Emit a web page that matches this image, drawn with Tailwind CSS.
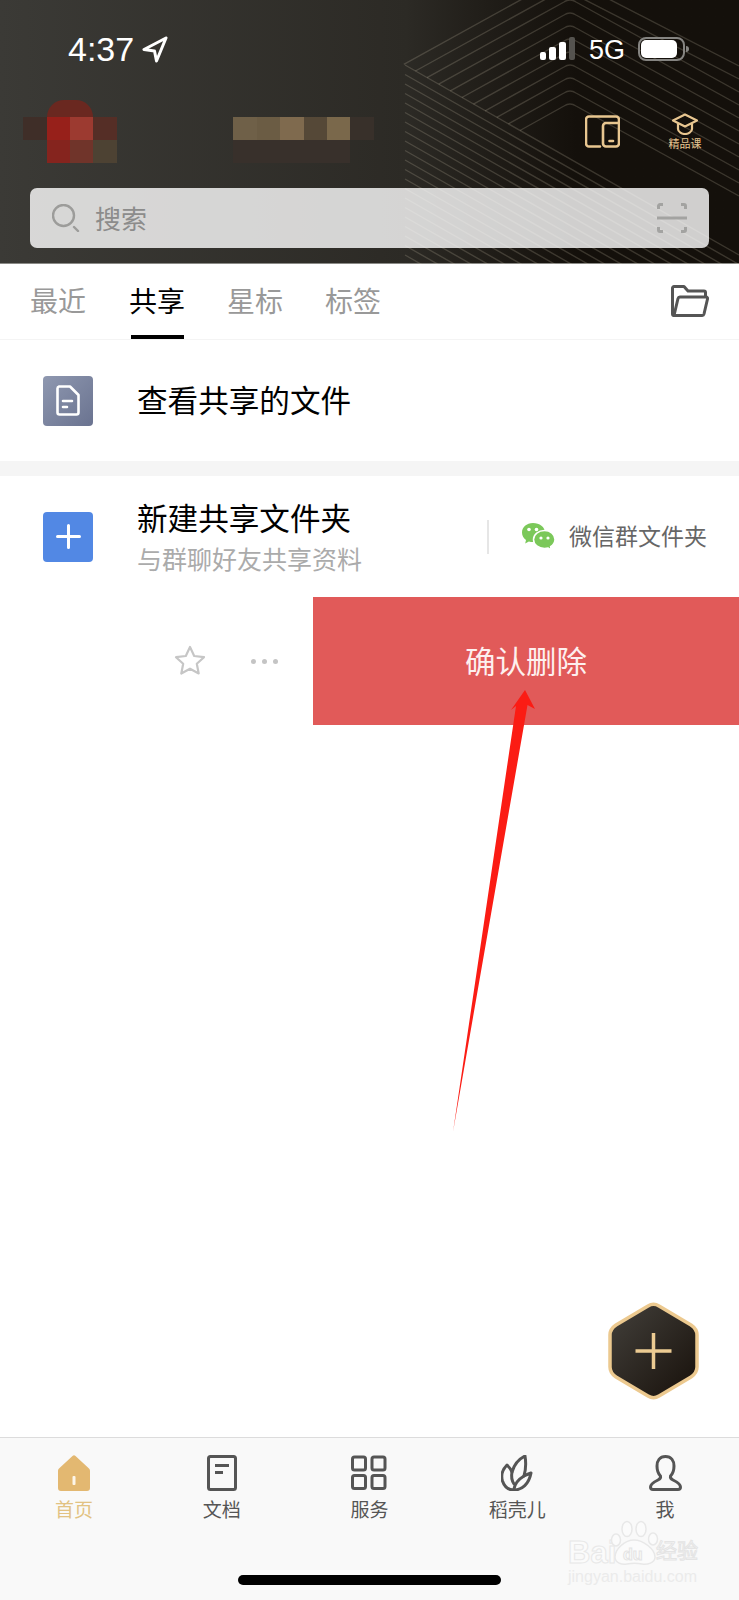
<!DOCTYPE html>
<html lang="zh">
<head>
<meta charset="utf-8">
<script src="https://cdn.jsdelivr.net/npm/@tailwindcss/browser@4"></script>
</head>
<body class="m-0 bg-white">
<div class="relative w-[739px] h-[1600px] overflow-hidden flex flex-col bg-white font-['Liberation_Sans','Noto_Sans_CJK_SC',sans-serif]">

  <!-- header -->
  <header class="relative h-[264px] shrink-0 bg-gradient-to-r from-[#3b3a36] via-[#2c2a25] via-55% to-[#14100b] to-[78%] border-b border-[#8a8a86] flex flex-col">
    <svg class="absolute inset-0" width="739" height="264" viewBox="0 0 739 264" fill="none" stroke="#c9bfa8" stroke-opacity=".22" stroke-width="1.4">
      <path d="M520 130.500L564 106Q570 102 576 106L739 196M508.400 123.900L564 93Q570 89 576 93L739 183M496.800 117.300L564 80Q570 76 576 80L739 170M485.100 110.800L564 67Q570 63 576 67L739 157M473.500 104.100L564 54Q570 50 576 54L739 144M461.900 97.500L564 41Q570 37 576 41L739 131M450.300 90.800L564 28Q570 24 576 28L739 118M438.700 84.200L564 15Q570 11 576 15L739 105M427 77.600L564 2Q570 -2 576 2L739 92M415.400 71L564 -11L739 79M403.800 64.300L564 -24L739 66"/>
      <path d="M405 65l334 190M405 74.500l334 190M405 84l334 190M405 93.500l334 190M405 103l334 190M405 112.500l334 190M405 122l334 190M405 131.500l334 190M405 141l334 190M405 150.500l334 190M405 160l334 190M405 169.500l334 190M405 179l334 190M405 188.500l334 190M405 198l334 190M405 207.500l334 190M405 217l334 190M405 226.500l334 190M405 236l334 190M405 245.500l334 190M405 255l334 190"/>
    </svg>

    <!-- status bar -->
    <div class="relative h-[100px] flex items-start text-white">
      <span class="ml-[68px] mt-[29px] text-[34px] leading-[40px] font-medium">4:37</span>
      <svg class="ml-[8px] mt-[36px]" width="26" height="27" viewBox="0 0 26 27" fill="none" stroke="#fff" stroke-width="3" stroke-linejoin="round"><path d="M24 2L2 13.500L12.500 15L14.500 25Z"/></svg>
      <div class="ml-auto mt-[37px] flex items-end gap-[3px] h-[23px]">
        <span class="w-[6px] h-[8px] rounded-[2px] bg-white"></span>
        <span class="w-[7px] h-[13px] rounded-[2px] bg-white"></span>
        <span class="w-[7px] h-[18px] rounded-[2px] bg-white"></span>
        <span class="w-[6px] h-[23px] rounded-[2px] bg-[#55534f]"></span>
      </div>
      <span class="ml-[14px] mt-[33px] text-[27px] leading-[34px]">5G</span>
      <div class="ml-[13px] mt-[37px] w-[47px] h-[24px] rounded-[8px] border-2 border-[#858481] p-[1px]">
        <div class="w-[36px] h-full rounded-[5px] bg-white"></div>
      </div>
      <span class="ml-[1px] mr-[50px] mt-[46px] w-[3px] h-[6px] rounded-r-full bg-[#858481]"></span>
    </div>

    <!-- account row -->
    <div class="relative h-[88px] flex">
      <div class="ml-[23px] mt-0 flex flex-col">
        <div class="ml-[24px] w-[46px] h-[17px] rounded-t-[24px] bg-[#6a2820]"></div>
        <div class="flex">
          <span class="w-[24px] h-[23px] bg-[#3f2e28]"></span><span class="w-[23px] h-[23px] bg-[#97201a]"></span><span class="w-[23px] h-[23px] bg-[#9c3a30]"></span><span class="w-[24px] h-[23px] bg-[#552e26]"></span>
        </div>
        <div class="flex ml-[24px]">
          <span class="w-[23px] h-[23px] bg-[#85241e]"></span><span class="w-[23px] h-[23px] bg-[#70342a]"></span><span class="w-[24px] h-[23px] bg-[#4d4233]"></span>
        </div>
      </div>
      <div class="ml-[116px] mt-[17px] flex flex-col">
        <div class="flex">
          <span class="w-[24px] h-[23px] bg-[#6f6048]"></span><span class="w-[23px] h-[23px] bg-[#6b5c44]"></span><span class="w-[24px] h-[23px] bg-[#7f6a4e]"></span><span class="w-[23px] h-[23px] bg-[#554837]"></span><span class="w-[23px] h-[23px] bg-[#7a684b]"></span><span class="w-[24px] h-[23px] bg-[#38302a]"></span>
        </div>
        <div class="w-[117px] h-[23px] bg-[#38302b]"></div>
      </div>
      <svg class="ml-[211px] mt-[15px]" width="35" height="33" viewBox="0 0 35 33" fill="none" stroke="#e8c690" stroke-width="2.600" stroke-linecap="round" stroke-linejoin="round">
        <path d="M15 31.500H4a3 3 0 0 1-3-3V4.500a3 3 0 0 1 3-3H31a3 3 0 0 1 3 3V28.500a3 3 0 0 1-3 3H21a3 3 0 0 1-3-3V11a3 3 0 0 1 3-3H34"/>
        <path d="M24.500 26H28"/>
      </svg>
      <div class="ml-[48px] mt-[13px] w-[34px] flex flex-col items-center">
        <svg width="26" height="22" viewBox="0 0 26 22" fill="none" stroke="#e8c690" stroke-width="2.200" stroke-linejoin="round"><path d="M13 1.500L25 7.500L13 13.500L1 7.500Z"/><path d="M6 10.500V16C6 19 10 21 13 21C16 21 20 19 20 16V10.500"/></svg>
        <span class="text-[11px] leading-[14px] mt-[2px] whitespace-nowrap text-[#e8c690]">精品课</span>
      </div>
    </div>

    <!-- search -->
    <div class="relative mx-[30px] w-[679px] h-[60px] rounded-[7px] bg-white/80 flex items-center">
      <svg class="ml-[22px]" width="28" height="28" viewBox="0 0 28 28" fill="none" stroke="#9c9c9a" stroke-width="2.400" stroke-linecap="round"><circle cx="11.500" cy="11.500" r="10.500"/><path d="M22 23L26 27"/></svg>
      <span class="ml-[15px] mt-[3px] text-[26px] leading-[34px] text-[#8c8c8b]">搜索</span>
      <svg class="ml-auto mr-[22px]" width="30" height="30" viewBox="0 0 30 30" fill="none" stroke="#a3a3a1" stroke-width="3"><path d="M1.500 6V3a1.500 1.500 0 0 1 1.500-1.500H6M24 1.500h3a1.500 1.500 0 0 1 1.500 1.500V6M1.500 24v3a1.500 1.500 0 0 0 1.500 1.500H6M24 28.500h3a1.500 1.500 0 0 0 1.500-1.500V24M0 15H30"/></svg>
    </div>
  </header>

  <!-- tabs -->
  <nav class="h-[76px] shrink-0 border-b border-[#f4f4f4] flex text-[28px] leading-[38px] text-[#999]">
    <span class="ml-[30px] mt-[20px]">最近</span>
    <div class="ml-[43px] flex flex-col items-center justify-between text-black pt-[20px]">
      <span>共享</span>
      <span class="w-[53px] h-[4px] bg-black"></span>
    </div>
    <span class="ml-[42px] mt-[20px]">星标</span>
    <span class="ml-[42px] mt-[20px]">标签</span>
    <svg class="ml-auto mr-[30px] mt-[21px]" width="38" height="32" viewBox="0 0 38 32" fill="none" stroke="#555" stroke-width="3" stroke-linejoin="round"><path d="M3 30.500a1.500 1.500 0 0 1-1.500-1.500V3a1.500 1.500 0 0 1 1.500-1.500H13L17 6H33a1.500 1.500 0 0 1 1.500 1.500V12"/><path d="M3 30.500L7 13.500a2 2 0 0 1 2-1.500H35a1.500 1.500 0 0 1 1.500 2L33 29a2 2 0 0 1-2 1.500Z"/></svg>
  </nav>

  <!-- row 1 -->
  <section class="h-[121px] shrink-0 flex items-center">
    <div class="ml-[43px] w-[50px] h-[50px] rounded-[4px] bg-gradient-to-br from-[#8f98b0] to-[#6a7390] flex items-center justify-center">
      <svg width="24" height="31" viewBox="0 0 24 31" fill="none" stroke="#fff" stroke-width="2.600" stroke-linecap="round" stroke-linejoin="round"><path d="M3 1.500H14L22.500 10V27.500a2 2 0 0 1-2 2H3.500a2 2 0 0 1-2-2V3.500a2 2 0 0 1 1.500-2Z"/><path d="M7 16H16M7 22H11"/></svg>
    </div>
    <span class="ml-[44px] text-[30.600px] leading-[40px] text-black">查看共享的文件</span>
  </section>
  <div class="h-[15px] shrink-0 bg-[#f5f5f5]"></div>

  <!-- row 2 -->
  <section class="h-[121px] shrink-0 flex items-center">
    <div class="ml-[43px] w-[50px] h-[50px] rounded-[4px] bg-[#5288e4] flex items-center justify-center">
      <svg width="25" height="25" viewBox="0 0 25 25" stroke="#fff" stroke-width="3" stroke-linecap="round"><path d="M12.500 1.500V23.500M1.500 12.500H23.500"/></svg>
    </div>
    <div class="ml-[44px] w-[260px] flex flex-col">
      <span class="mt-[2px] text-[30.600px] leading-[40px] whitespace-nowrap text-black">新建共享文件夹</span>
      <span class="mt-[4px] text-[25px] leading-[34px] whitespace-nowrap text-[#ababab]">与群聊好友共享资料</span>
    </div>
    <span class="ml-[90px] w-[2px] h-[34px] bg-[#e6e6e6]"></span>
    <svg class="ml-[32px]" width="35" height="29" viewBox="0 0 35 29" fill="#7bc85a">
      <path d="M12 1C5.500 1 1 5.300 1 10.500c0 3 1.500 5.700 4 7.500l-.8 3.500 3.700-2c1.300.4 2.700.6 4.100.6 6.500 0 12-4.200 12-9.600S18.500 1 12 1Z"/>
      <path d="M23.500 8.500c-6 0-11 4-11 9s5 9 11 9c1.300 0 2.600-.2 3.700-.5l3 2-.6-3.300c2.500-1.700 4.400-4.200 4.400-7.200 0-5-4.500-9-10.500-9Z" stroke="#fff" stroke-width="1.500"/>
      <circle cx="8" cy="7.500" r="1.800" fill="#fff"/><circle cx="15.500" cy="7.500" r="1.800" fill="#fff"/><circle cx="20" cy="16" r="1.600" fill="#fff"/><circle cx="27" cy="16" r="1.600" fill="#fff"/>
    </svg>
    <span class="ml-[13px] text-[23px] leading-[32px] whitespace-nowrap text-[#666]">微信群文件夹</span>
  </section>

  <!-- swiped row -->
  <section class="h-[128px] shrink-0 flex items-center">
    <svg class="ml-[174px] -mt-[2px]" width="32" height="30" viewBox="0 0 32 30" fill="none" stroke="#c6c6c6" stroke-width="2.200" stroke-linejoin="round"><path d="M16 2L20.200 11L30 12.200L22.800 18.800L24.700 28.500L16 23.700L7.300 28.500L9.200 18.800L2 12.200L11.800 11Z"/></svg>
    <div class="ml-[45px] flex gap-[6px]">
      <span class="w-[5px] h-[5px] rounded-full bg-[#c4c4c4]"></span>
      <span class="w-[5px] h-[5px] rounded-full bg-[#c4c4c4]"></span>
      <span class="w-[5px] h-[5px] rounded-full bg-[#c4c4c4]"></span>
    </div>
    <div class="ml-auto w-[426px] h-full bg-[#e15a59] flex items-center justify-center pt-[2px] text-[30.500px] leading-[40px] text-[#fdf0ef]">确认删除</div>
  </section>

  <main class="flex-1"></main>

  <!-- bottom nav -->
  <footer class="relative h-[163px] shrink-0 border-t border-[#dcdcdc] bg-[#f9f9f9]">
    <div class="grid grid-cols-5 pt-[17px] text-[19px] leading-[26px] text-[#555]">
      <div class="flex flex-col items-center text-[#e2c282]">
        <svg width="34" height="36" viewBox="0 0 34 36" fill="#e3b871"><path d="M15.500 1a2 2 0 0 1 3 0L32 13.500a3 3 0 0 1 1 2.200V33a3 3 0 0 1-3 3H4a3 3 0 0 1-3-3V15.700a3 3 0 0 1 1-2.200Z"/><rect x="15.500" y="21" width="3" height="9" rx="1" fill="#fdf6ea"/></svg>
        <span class="mt-[7px]">首页</span>
      </div>
      <div class="flex flex-col items-center">
        <svg width="30" height="36" viewBox="0 0 30 36" fill="none" stroke="#555" stroke-width="3"><rect x="1.500" y="1.500" width="27" height="33" rx="2"/><path d="M8 10.500H22M8 17.500H16"/></svg>
        <span class="mt-[7px]">文档</span>
      </div>
      <div class="flex flex-col items-center">
        <svg width="36" height="36" viewBox="0 0 36 36" fill="none" stroke="#555" stroke-width="3"><rect x="1.500" y="2" width="13" height="13" rx="2"/><rect x="21" y="2" width="13" height="13" rx="2"/><rect x="1.500" y="20.500" width="13" height="13" rx="2"/><rect x="21" y="20.500" width="13" height="13" rx="2"/></svg>
        <span class="mt-[7px]">服务</span>
      </div>
      <div class="flex flex-col items-center">
        <svg width="32" height="36" viewBox="0 0 32 36" fill="none" stroke="#555" stroke-width="3" stroke-linejoin="round" stroke-linecap="round"><path d="M6 10C1 15 0 21 1.500 26C3.500 32 8 35 13 35C21 35 28 29 30 18C27 19 25 20 23 21C25 14 25 7 24 1C18 4 13 10 11 17C10 14 8 12 6 10Z"/><path d="M11 17C10 22 11 26 13 29M13 34C14 28 18 24 23 21"/></svg>
        <span class="mt-[7px]">稻壳儿</span>
      </div>
      <div class="flex flex-col items-center">
        <svg width="33" height="36" viewBox="0 0 33 36" fill="none" stroke="#555" stroke-width="3" stroke-linejoin="round"><path d="M16.500 1.500C10.500 1.500 8 6 8 11C8 15 9.500 19 11.500 21C12 23 11 24 9 25C5 27 1.500 29 1.500 32C1.500 33.500 2.500 34.500 4 34.500H29C30.500 34.500 31.500 33.500 31.500 32C31.500 29 28 27 24 25C22 24 21 23 21.500 21C23.500 19 25 15 25 11C25 6 22.500 1.500 16.500 1.500Z"/></svg>
        <span class="mt-[7px]">我</span>
      </div>
    </div>
    <div class="absolute left-[238px] top-[137px] w-[263px] h-[10px] rounded-full bg-black"></div>

    <!-- watermark -->
    <div class="absolute left-[566px] top-[82px] w-[136px] h-[66px]">
      <span class="absolute left-[2px] top-[15px] text-[31px] leading-[36px] font-bold text-[#fbfbfb] [-webkit-text-stroke:1px_#e8e8e8]">Bai</span>
      <svg class="absolute left-[44px] top-0" width="50" height="46" viewBox="0 0 50 46" fill="#fbfbfb" stroke="#e8e8e8" stroke-width="1.500"><ellipse cx="6" cy="20" rx="4.500" ry="6"/><ellipse cx="17" cy="9" rx="5" ry="7.500"/><ellipse cx="31" cy="9" rx="5" ry="7.500"/><ellipse cx="43" cy="19" rx="4.500" ry="6"/><path d="M24 20C15 20 5 29 5 37C5 43 12 45 17 44C22 43 27 43 32 44C37 45 45 43 45 37C45 29 33 20 24 20Z"/></svg>
      <span class="absolute left-[57px] top-[26px] text-[16px] leading-[18px] font-bold text-[#fbfbfb] [-webkit-text-stroke:1px_#e4e4e4]">du</span>
      <span class="absolute left-[90px] top-[17px] text-[21px] leading-[28px] whitespace-nowrap text-[#fbfbfb] [-webkit-text-stroke:1px_#e4e4e4]">经验</span>
      <span class="absolute left-[2px] top-[48px] text-[16px] leading-[18px] whitespace-nowrap text-[#ebebeb]">jingyan.baidu.com</span>
    </div>
  </footer>

  <!-- red annotation arrow -->
  <svg class="absolute left-[440px] top-[680px]" width="110" height="460" viewBox="440 680 110 460" fill="#fb1c14"><path d="M525 690L535 709L527.500 705L453 1132L516 706L511 710Z"/></svg>

  <!-- floating button -->
  <svg class="absolute left-[603px] top-[1296px]" width="101" height="110" viewBox="603 1296 101 110">
    <defs><linearGradient id="fab" x1="0" y1="0" x2="1" y2="1"><stop offset="0" stop-color="#43403b"/><stop offset="1" stop-color="#17100a"/></linearGradient></defs>
    <path d="M648 1306Q653.500 1302.500 659 1306L691 1325Q697 1329 697 1335V1367Q697 1373 691 1377L659 1396Q653.500 1399.500 648 1396L616 1377Q610 1373 610 1367V1335Q610 1329 616 1325Z" fill="url(#fab)" stroke="#ecc98f" stroke-width="3.500" stroke-linejoin="round"/>
    <path d="M653.500 1333V1369M635.500 1351H671.500" stroke="#eccb92" stroke-width="3.500" fill="none"/>
  </svg>
</div>
</body>
</html>
